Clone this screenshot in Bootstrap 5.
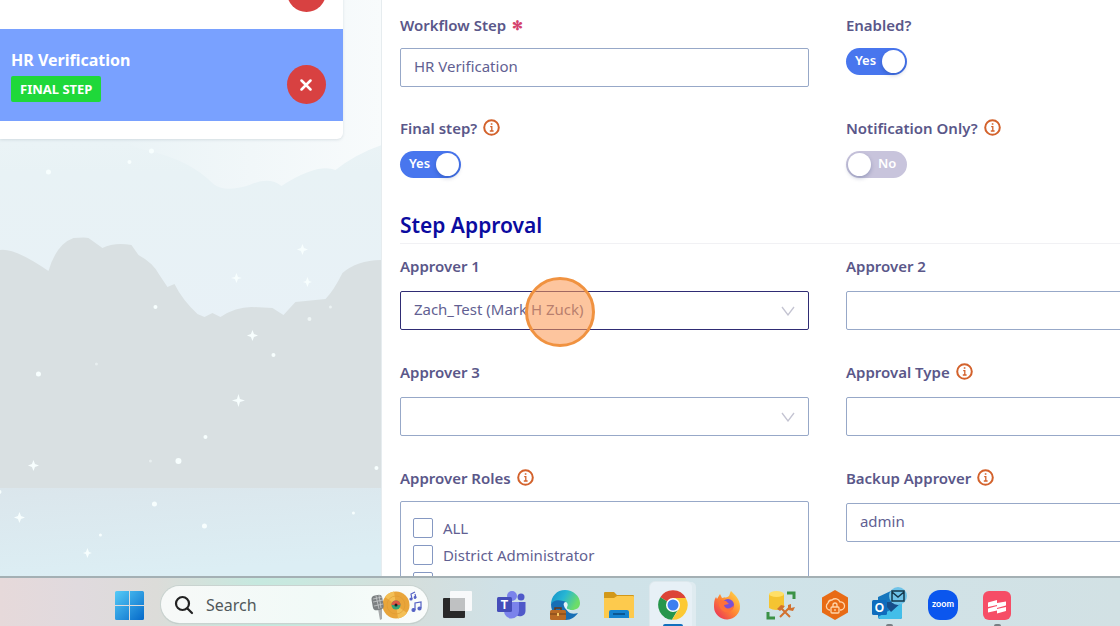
<!DOCTYPE html>
<html lang="en">
<head>
<meta charset="utf-8">
<meta name="viewport" content="width=device-width, initial-scale=1">
<title>Workflow step</title>
<link href="https://cdn.jsdelivr.net/npm/bootstrap@5.3.0/dist/css/bootstrap.min.css" rel="stylesheet">
<style>
  body { font-family: "Noto Sans", "Open Sans", sans-serif; font-size: 15px; line-height: 24px; color: #625f92; background: #fff; }
  .steps-pane { flex: 0 0 34.1%; min-width: 0; background: #e8f2f6; border-right: 1px solid #e6ecef; }
  .scene { position: absolute; inset: 0; width: 100%; height: 100%; }
  .steps-card { width: 90%; margin-top: -63px; padding-bottom: 18px; background: #fff; border-radius: 0 0 6px 0; box-shadow: 0 1px 3px rgba(90,110,130,.18); }
  .step-item { height: 92px; padding: 19px 17px 17px 11px; background: #fff; }
  .step-item.current { background: #79a1ff; color: #fff; }
  .step-name { font-size: 16px; font-weight: 700; }
  .final-tag { background: #1fd83a; color: #fff; font-size: 13px; font-weight: 700; line-height: 18px; border-radius: 2px; padding: 4px 9px; }
  .btn-remove { width: 39px; height: 39px; background: #d84141; color: #fff; border: 0; border-radius: 50%; padding: 0; }
  .form-pane { padding: 13px 0 0 18px; }
  .field-grid { display: grid; grid-template-columns: repeat(2, 56.8%); column-gap: 37px; }
  .basic-grid { row-gap: 29px; }
  .approval-grid { row-gap: 30px; }
  .field-title { font-weight: 600; color: #5a5789; display: flex; align-items: center; gap: 6px; margin-bottom: 11px; white-space: nowrap; }
  .approval-grid .field-title { margin-bottom: 13px; }
  .field-title svg { margin-bottom: 2px; }
  .required { color: #d4436d; font-size: 13px; }
  .form-control, .form-select { height: 39px; border: 1px solid #97a8c8; border-radius: 2px; color: #625f92; font-size: 15px; line-height: 24px; padding: 5px 13px 8px; }
  .form-select { background-image: url("data:image/svg+xml,%3Csvg xmlns='http://www.w3.org/2000/svg' viewBox='0 0 14 10'%3E%3Cpath fill='none' stroke='%23c4c4d2' stroke-width='1.3' d='M1 1l6 8 6-8'/%3E%3C/svg%3E"); background-size: 14px 10px; background-position: right 13px center; }
  .form-select.active-field { border-color: #2f2c74; }
  .toggle { width: 61px; height: 27px; }
  .toggle input { appearance: none; width: 61px; height: 27px; margin: 0; display: block; border-radius: 14px; background: #c8c4dc; }
  .toggle input::before { content: ""; display: block; width: 23px; height: 23px; border-radius: 50%; background: #fff; position: relative; top: 2px; left: 2px; box-shadow: 0 2px 4px rgba(0,30,90,.25); }
  .toggle input:checked { background: #4876ee; }
  .toggle input:checked::before { left: 36px; }
  .toggle span { position: absolute; top: 0; left: 32px; color: #fff; font-size: 13px; font-weight: 600; }
  .toggle input:checked + span { left: 9px; }
  .section-title { margin: 32px 0 10px; padding-bottom: 3px; border-bottom: 1px solid #f1f1f4; color: #0b0ba0; font-size: 21px; font-weight: 600; line-height: 30px; }
  .click-mark { position: absolute; left: 125px; top: -14px; width: 70px; height: 70px; border: 3px solid #f09240; border-radius: 50%; background: rgba(251,151,82,.56); pointer-events: none; }
  .role-list { border: 1px solid #97a8c8; border-radius: 2px; padding: 12px; height: 120px; overflow: hidden; margin-top: -2px; }
  .role-row { height: 27px; display: flex; align-items: center; gap: 10px; }
  .role-row .form-check-input { width: 20px; height: 20px; margin: 0; border: 1px solid #8598c2; border-radius: 2px; }
  .taskbar { position: relative; flex: 0 0 50px; border-top: 2px solid #a4b0b4; padding: 0 0 0 6px; background: linear-gradient(90deg, #e6d9da 0, #e0dade 7%, #dcdcd9 14%, #c6e9df 23%, #c9e8df 27%, #d5dedb 36%, #cfe1e7 45%, #cfe3e9 65%, #d2e1e4 100%); }
  .task-btn { position: relative; width: 54px; height: 48px; border: 0; background: none; padding: 6px 0 0; display: flex; align-items: center; justify-content: center; flex: none; }
  .task-btn.running::before { content: ""; position: absolute; z-index: 0; left: 4px; top: 4px; width: 42px; height: 44px; border-radius: 5px 5px 0 0; background: #e7f0f6; box-shadow: 4px 0 0 #dfebf0, 0 0 0 1px #dde8ed; }
  .task-btn.running::after { content: ""; position: absolute; left: 17px; bottom: 0; width: 20px; height: 2px; border-radius: 2px 2px 0 0; background: #1170bd; }
  .task-btn.idle::after { content: ""; position: absolute; left: 24px; bottom: 0; width: 7px; height: 2px; border-radius: 2px 2px 0 0; background: #777f84; }
  .task-btn svg { position: relative; z-index: 1; flex: none; }
  .search-box { width: 267px; height: 37px; margin: 8px 2px 0 5px; padding: 0 4px 0 13px; border-radius: 19px; background: linear-gradient(90deg, #f7f9f8, #f1faf7 60%, #fafcfb); box-shadow: 0 0 0 1px #c9d3d0, 0 1px 1px #a9b5b1; }
  .search-box input { flex: 1 1 0; min-width: 0; border: 0; background: none; outline: 0; color: #51585a; font-size: 16px; padding: 0 0 0 12px; }
  .search-box input::placeholder { color: #51585a; opacity: 1; }
</style>
</head>
<body class="vh-100 d-flex flex-column overflow-hidden">
<svg width="0" height="0" class="position-absolute" aria-hidden="true">
  <symbol id="info" viewBox="0 0 17 17"><circle cx="8.500" cy="8.500" r="7.300" fill="none" stroke="#d3622c" stroke-width="2"/><path d="M7.200 7.700h1.600v4M6.800 12h3.800M7.800 5h1.600" fill="none" stroke="#d3622c" stroke-width="1.300"/></symbol>
  <symbol id="cross" viewBox="0 0 12 12"><path d="M1.500 1.500l9 9M10.500 1.500l-9 9" stroke="currentColor" stroke-width="2.500" stroke-linecap="round"/></symbol>
</svg>

<main class="d-flex flex-grow-1 overflow-hidden" style="min-height:0">
  <aside class="steps-pane position-relative overflow-hidden">
    <svg class="scene" viewBox="0 0 382 576" preserveAspectRatio="xMidYMid slice" aria-hidden="true">
      <defs>
        <linearGradient id="sky" x1="0" y1="0" x2="0" y2="1"><stop offset="0" stop-color="#f4f8fa"/><stop offset=".3" stop-color="#e8f2f5"/><stop offset=".6" stop-color="#e8f1f7"/></linearGradient>
        <linearGradient id="lake" x1="0" y1="0" x2=".3" y2="1"><stop offset="0" stop-color="#dbe6ec"/><stop offset="1" stop-color="#dceef4"/></linearGradient>
        <linearGradient id="cloud" x1="0" y1="0" x2="1" y2="0"><stop offset="0" stop-color="#eaf3f6"/><stop offset="1" stop-color="#f8fbfc"/></linearGradient>
      </defs>
      <rect width="382" height="576" fill="url(#sky)"/>
      <path d="M382 0v145q-26 9-46 25-18-7-54 16-12-10-32-1-25 8-36-1Q190 160 150 151 130 147 120 138V0z" fill="url(#cloud)"/>
      <path d="M0 250q14-3 49 21 8-27 25-33 12-1 15 0l14 10q12-6 29-3l7 10q15 8 21 20l8 12 7-3q8 16 23 30l7 3 8-4 8 4q15-10 31-10l21 1 11 7 12-13 30-3q8-8 17-26 15-13 41-13V490H0z" fill="#d9e0e2"/>
      <rect y="488" width="382" height="88" fill="url(#lake)"/>
      <g fill="#f7fefe">
        <path d="M239 394l1.500 5 5 1.500-5 1.500-1.500 5-1.500-5-5-1.500 5-1.500zM253 330l1.500 4 4 1.500-4 1.500-1.500 4-1.500-4-4-1.500 4-1.500zM237 273l1.500 4 4 1-4 1-1.500 4-1.500-4-4-1 4-1zM303 244l1.500 4 4 1.500-4 1.500-1.500 4-1.500-4-4-1.500 4-1.500zM34 460l1.500 4 4 1.500-4 1.500-1.500 4-1.500-4-4-1.500 4-1.500zM20 512l1.500 4 4 1.500-4 1.500-1.500 4-1.500-4-4-1.500 4-1.500zM88 548l1.500 4 3 1-3 1-1.500 4-1.500-4-3-1 3-1zM308 277l1.500 4 3 1-3 1-1.500 4-1.500-4-3-1 3-1z"/>
        <circle cx="49" cy="172" r="2.500"/><circle cx="130" cy="162" r="2"/><circle cx="152" cy="151" r="2.500"/><circle cx="156" cy="307" r="2"/><circle cx="39" cy="374" r="2.500"/><circle cx="274" cy="355" r="2"/><circle cx="206" cy="437" r="2"/><circle cx="179" cy="461" r="3"/><circle cx="155" cy="504" r="2.500"/><circle cx="205" cy="526" r="2.500"/><circle cx="354" cy="513" r="1.500"/><circle cx="377" cy="468" r="2"/><circle cx="101" cy="535" r="1.500"/><circle cx="310" cy="319" r="2" opacity=".7"/><circle cx="331" cy="307" r="1.500" opacity=".6"/><circle cx="97" cy="364" r="1.500" opacity=".5"/><circle cx="151" cy="461" r="1.500" opacity=".5"/><circle cx="0" cy="492" r="2"/>
      </g>
    </svg>
    <div class="steps-card position-relative">
      <div class="step-item d-flex justify-content-end align-items-end">
        <button type="button" class="btn-remove d-flex align-items-center justify-content-center" aria-label="Remove step"><svg width="12" height="12"><use href="#cross"/></svg></button>
      </div>
      <div class="step-item current d-flex justify-content-between align-items-end">
        <div class="d-flex flex-column align-items-start align-self-start gap-1">
          <span class="step-name">HR Verification</span>
          <span class="final-tag">FINAL STEP</span>
        </div>
        <button type="button" class="btn-remove d-flex align-items-center justify-content-center" aria-label="Remove HR Verification"><svg width="12" height="12"><use href="#cross"/></svg></button>
      </div>
    </div>
  </aside>

  <form class="form-pane flex-grow-1 overflow-hidden" style="min-width:0">
    <div class="field-grid basic-grid">
      <div>
        <label class="field-title" for="stepName">Workflow Step <span class="required">✻</span></label>
        <input id="stepName" type="text" class="form-control" value="HR Verification">
      </div>
      <div>
        <label class="field-title" for="enabled">Enabled?</label>
        <label class="toggle position-relative d-block"><input type="checkbox" id="enabled" checked><span>Yes</span></label>
      </div>
      <div>
        <label class="field-title" for="finalStep">Final step? <svg width="17" height="17"><use href="#info"/></svg></label>
        <label class="toggle position-relative d-block"><input type="checkbox" id="finalStep" checked><span>Yes</span></label>
      </div>
      <div>
        <label class="field-title" for="notifyOnly">Notification Only? <svg width="17" height="17"><use href="#info"/></svg></label>
        <label class="toggle position-relative d-block"><input type="checkbox" id="notifyOnly"><span>No</span></label>
      </div>
    </div>

    <h2 class="section-title">Step Approval</h2>

    <div class="field-grid approval-grid">
      <div>
        <label class="field-title" for="approver1">Approver 1</label>
        <div class="position-relative">
          <select id="approver1" class="form-select active-field"><option>Zach_Test (Mark H Zuck)</option></select>
          <span class="click-mark"></span>
        </div>
      </div>
      <div>
        <label class="field-title" for="approver2">Approver 2</label>
        <select id="approver2" class="form-select"><option></option></select>
      </div>
      <div>
        <label class="field-title" for="approver3">Approver 3</label>
        <select id="approver3" class="form-select"><option></option></select>
      </div>
      <div>
        <label class="field-title" for="approvalType">Approval Type <svg width="17" height="17"><use href="#info"/></svg></label>
        <select id="approvalType" class="form-select"><option></option></select>
      </div>
      <div>
        <div class="field-title" id="rolesTitle">Approver Roles <svg width="17" height="17"><use href="#info"/></svg></div>
        <div class="role-list" role="group" aria-labelledby="rolesTitle">
          <label class="role-row"><input type="checkbox" class="form-check-input">ALL</label>
          <label class="role-row"><input type="checkbox" class="form-check-input">District Administrator</label>
          <label class="role-row"><input type="checkbox" class="form-check-input">HR Staff</label>
        </div>
      </div>
      <div>
        <label class="field-title" for="backup">Backup Approver <svg width="17" height="17"><use href="#info"/></svg></label>
        <select id="backup" class="form-select"><option>admin</option></select>
      </div>
    </div>
  </form>
</main>

<footer class="taskbar d-flex justify-content-center">
  <button class="task-btn" type="button" aria-label="Start">
    <svg width="29" height="29" viewBox="0 0 29 29"><defs><linearGradient id="win" gradientUnits="userSpaceOnUse" x1="0" y1="0" x2="29" y2="29"><stop offset="0" stop-color="#55cbf7"/><stop offset="1" stop-color="#0569c9"/></linearGradient></defs><path fill="url(#win)" d="M1.500 0H14v14H0V1.500Q0 0 1.500 0zM15 0h12.500Q29 0 29 1.500V14H15zM0 15h14v14H1.500Q0 29 0 27.500zM15 15h14v12.500q0 1.500-1.500 1.500H15z"/></svg>
  </button>
  <div class="search-box d-flex align-items-center flex-shrink-0">
    <svg width="20" height="20" viewBox="0 0 20 20" fill="none" stroke="#222" stroke-width="2.200" stroke-linecap="round"><circle cx="8.500" cy="8.500" r="6.500"/><path d="M13.500 13.500l4.500 4.500"/></svg>
    <input type="search" placeholder="Search" aria-label="Search">
    <svg width="54" height="30" viewBox="0 0 54 30">
      <circle cx="26" cy="15" r="13.500" fill="#e9a53a"/><path d="M26 15L15 7A13.500 13.500 0 0 1 24 1.600zM26 15l11 8a13.500 13.500 0 0 1-9 5.400z" fill="#f3bf55"/><circle cx="26" cy="15" r="9" fill="none" stroke="#dd9a30" stroke-width=".6"/><circle cx="26" cy="15" r="4.500" fill="#35a478"/><path d="M21.500 15a4.500 4.500 0 0 1 9 0z" fill="#dd5846"/><circle cx="26" cy="15" r="1.500" fill="#222"/>
      <path d="M8 19l2 11 2-1v-11z" fill="#a8abac"/><rect x="2" y="5" width="11" height="15" rx="4" fill="#7d8183" transform="rotate(-10 8 12)"/><path d="M3 9l9-2M3 12l10-2M4 16l9-2M6 6l3 13M9 5l2 13" stroke="#c9cccc" stroke-width=".8"/>
      <g fill="#5461c4" stroke="#5461c4" stroke-width="1.200"><path d="M42 9l-1-5 4-2M45 20v-7l6-1v6" fill="none"/><circle cx="41" cy="9" r="1"/><circle cx="45" cy="7.500" r=".8"/><path d="M46 8l-1-4" fill="none"/><circle cx="43.500" cy="20" r="1.500"/><circle cx="49.500" cy="18.500" r="1.500"/></g>
    </svg>
  </div>
  <button class="task-btn" type="button" aria-label="Task view"><svg width="30" height="30" viewBox="0 0 30 30"><rect x="1" y="8" width="22" height="20" rx="1" fill="#292929"/><rect x="8" y="1" width="22" height="20" rx="1" fill="#f8f9fa"/><path d="M8 8h15v13H8z" fill="#bfc1c2"/></svg></button>
  <button class="task-btn" type="button" aria-label="Teams"><svg width="30" height="28" viewBox="0 0 30 28"><circle cx="25" cy="6" r="3.500" fill="#5059c9"/><path d="M19 11h10.500v9a5.500 5.500 0 0 1-10.500 2z" fill="#5059c9"/><circle cx="16" cy="5" r="5" fill="#7b83eb"/><path d="M8 11h15v9a7.500 7.500 0 0 1-15 0z" fill="#7b83eb"/><rect x="1" y="6" width="15" height="15" rx="1.500" fill="#454db9"/><text x="8.500" y="18" font-family="Liberation Sans,sans-serif" font-weight="700" font-size="12" text-anchor="middle" fill="#fff">T</text></svg></button>
  <button class="task-btn" type="button" aria-label="Edge"><svg width="30" height="30" viewBox="0 0 30 30"><defs><linearGradient id="edge" x1="0" y1="0" x2="1" y2=".4"><stop offset="0" stop-color="#148fc8"/><stop offset=".5" stop-color="#27b6d4"/><stop offset="1" stop-color="#6ddd68"/></linearGradient></defs><path d="M1 14c0 9 6 16 15 16 5 0 9-3 12-7-6 2-12 0-12-7 0-3 1-5 3-6C12 5 3 7 1 14z" fill="#176eb5"/><path d="M1 15C1 6 7 0 15 0s15 6 15 13c0 5-4 7-8 7s-6-1-5-3 0-6-4-6C7 9 2 11 1 15z" fill="url(#edge)"/><path d="M16 12c2 1 2 3 1 5s1 3 5 3c-2 2-7 0-8-4-1-2 0-4 2-4z" fill="#e4f3f8"/><rect y="20" width="16" height="10" rx="1.500" fill="#b96a25"/><path d="M5 20v-2h6v2" fill="none" stroke="#693818" stroke-width="1.500"/><path d="M0 24h16" stroke="#70401b"/><path d="M7 23h2v3H7z" fill="#f4c45e"/></svg></button>
  <button class="task-btn" type="button" aria-label="File Explorer"><svg width="30" height="28" viewBox="0 0 30 28"><path d="M0 2Q0 1 1 1h9l3 3h16q1 0 1 1v6H0z" fill="#d29819"/><path d="M0 7h10l3-2h16q1 0 1 1v21H0z" fill="#fdca4d"/><path d="M5 27v-6q0-2 2-2h16q2 0 2 2v6z" fill="#1583cf"/><path d="M9 23h12" stroke="#095793" stroke-width="2"/></svg></button>
  <button class="task-btn running" type="button" aria-label="Chrome"><svg width="30" height="30" viewBox="0 0 30 30"><path d="M15 15L2.300 7.300A14.700 14.700 0 0 1 27.800 8z" fill="#dc4437"/><path d="M15 15L2.300 7.300A14.700 14.700 0 0 0 14 29.700l6.500-11.200z" fill="#26964b"/><path d="M15 8h12.800A14.700 14.700 0 0 1 14 29.700l7-11.200z" fill="#fcc934"/><circle cx="15" cy="15" r="7" fill="#fff"/><circle cx="15" cy="15" r="5.500" fill="#3d7ff0"/></svg></button>
  <button class="task-btn" type="button" aria-label="Firefox"><svg width="28" height="29" viewBox="0 0 28 29"><defs><linearGradient id="fox" x1="1" y1="0" x2="0" y2="1"><stop offset="0" stop-color="#ffe34a"/><stop offset=".5" stop-color="#ff8632"/><stop offset="1" stop-color="#e7245f"/></linearGradient></defs><path d="M3 6l1 2 3-5 2 4c3-1 5 0 7-2 1-2 1-4 2-5 3 3 9 8 9 15a13 13 0 0 1-26 1C1 12 1 9 3 6z" fill="url(#fox)"/><circle cx="15" cy="14" r="6" fill="#7950d5"/><path d="M7 9l6 1 3 3-5 1c1 5 7 4 10 0-1 7-7 9-11 6-4-3-5-7-3-11z" fill="#ff7139"/></svg></button>
  <button class="task-btn" type="button" aria-label="Database tools"><svg width="30" height="30" viewBox="0 0 30 30"><path d="M3 4v14q7 4 15 0V4z" fill="#f5c431"/><ellipse cx="10.500" cy="4" rx="7.500" ry="3" fill="#ffdf67"/><path d="M21 3h7v6M2 22v6h7" fill="none" stroke="#3b9246" stroke-width="3"/><path d="M14 27l10-10M14 17l10 10" stroke="#d2712f" stroke-width="2"/><path d="M11 19l4-4 4 1-5 5zM22 15l3-1v4l4-1-2 4-5-1z" fill="#d2712f"/></svg></button>
  <button class="task-btn" type="button" aria-label="Cloud VPN"><svg width="28" height="30" viewBox="0 0 28 30"><path d="M14 0l13 7.500v15L14 30 1 22.500v-15z" fill="#e86b15"/><path d="M9 20H8a4 4 0 0 1-1-7 4 4 0 0 1 4-3 5 5 0 0 1 8 2 4 4 0 0 1 1 8h-1" fill="none" stroke="#ffd4a8" stroke-width="1.300"/><rect x="10" y="17" width="8" height="6" rx="1" fill="#e86b15" stroke="#ffd4a8" stroke-width="1.300"/><path d="M12 17v-2a2 2 0 0 1 4 0v2M14 19v2" stroke="#ffd4a8" stroke-width="1.300" fill="none"/></svg></button>
  <button class="task-btn idle" type="button" aria-label="Outlook"><svg width="36" height="36" viewBox="0 0 36 36"><path d="M7 10L22 3l9 14v13q0 2-2 2H9q-2 0-2-2z" fill="#1676bd"/><path d="M7 30l24-14v14q0 2-2 2H9z" fill="#42bee9"/><path d="M12 15h19L20 25z" fill="#174e8a"/><rect x="1" y="13" width="15" height="15" rx="1.500" fill="#0f6cbd"/><text x="8.500" y="25" font-family="Liberation Sans,sans-serif" font-weight="700" font-size="12" text-anchor="middle" fill="#fff">O</text><circle cx="27" cy="9" r="9" fill="#6fc3e8"/><path d="M21 4h12v10H21zM21 5l6 5 6-5" fill="none" stroke="#15384b" stroke-width="1.500"/></svg></button>
  <button class="task-btn" type="button" aria-label="Zoom"><svg width="30" height="30" viewBox="0 0 30 30"><rect width="30" height="30" rx="12" fill="#0b56ee"/><text x="15" y="17" font-family="Lato,sans-serif" font-weight="700" font-size="9" text-anchor="middle" fill="#fff">zoom</text></svg></button>
  <button class="task-btn idle" type="button" aria-label="Scribe"><svg width="28" height="29" viewBox="0 0 28 29"><rect width="28" height="29" rx="6" fill="#f64d66"/><path d="M5 11.500l9-2.500v3l9-1.500v4L14 17v-3l-9 2zM5 17.500l9-2.500v3l9-2v4l-9 2.500v-3L5 21.500z" fill="#fff"/></svg></button>
</footer>
<script src="https://cdn.jsdelivr.net/npm/bootstrap@5.3.0/dist/js/bootstrap.bundle.min.js"></script>
</body>
</html>
